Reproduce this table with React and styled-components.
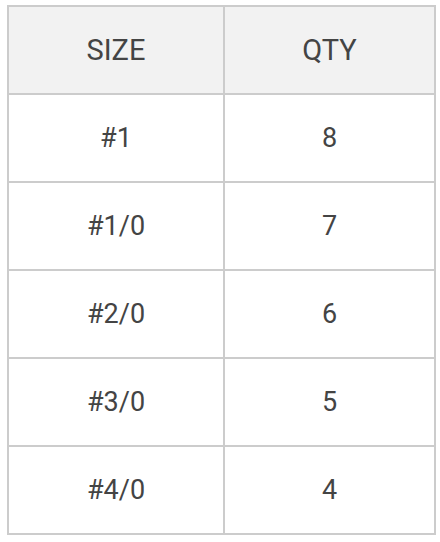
import React from "react";
import styled, { createGlobalStyle } from "styled-components";

const GlobalStyle = createGlobalStyle`
  body {
    margin: 0;
    background: #ffffff;
    font-family: Roboto, "Liberation Sans", sans-serif;
  }
`;

const Wrapper = styled.div`
  padding: 5px 6px 0 7px;
`;

const Table = styled.table`
  width: 427px;
  border-collapse: collapse;
  table-layout: fixed;
  color: #444444;
`;

const Column = styled.col`
  width: ${(p) => p.$width};
`;

const HeadCell = styled.th`
  height: 86px;
  padding: 0;
  border: 2px solid #cccccc;
  background: #f2f2f2;
  font-size: 29px;
  font-weight: 400;
  text-align: center;
`;

const Cell = styled.td`
  height: 86px;
  padding: 0;
  border: 2px solid #cccccc;
  font-size: 27px;
  text-align: center;
`;

const rows = [
  { size: "#1", qty: 8 },
  { size: "#1/0", qty: 7 },
  { size: "#2/0", qty: 6 },
  { size: "#3/0", qty: 5 },
  { size: "#4/0", qty: 4 },
];

function App() {
  return (
    <Wrapper>
      <GlobalStyle />
      <Table>
        <colgroup>
          <Column $width="216px" />
          <Column $width="211px" />
        </colgroup>
        <thead>
          <tr>
            <HeadCell>SIZE</HeadCell>
            <HeadCell>QTY</HeadCell>
          </tr>
        </thead>
        <tbody>
          {rows.map((row) => (
            <tr key={row.size}>
              <Cell>{row.size}</Cell>
              <Cell>{row.qty}</Cell>
            </tr>
          ))}
        </tbody>
      </Table>
    </Wrapper>
  );
}

export default App;
